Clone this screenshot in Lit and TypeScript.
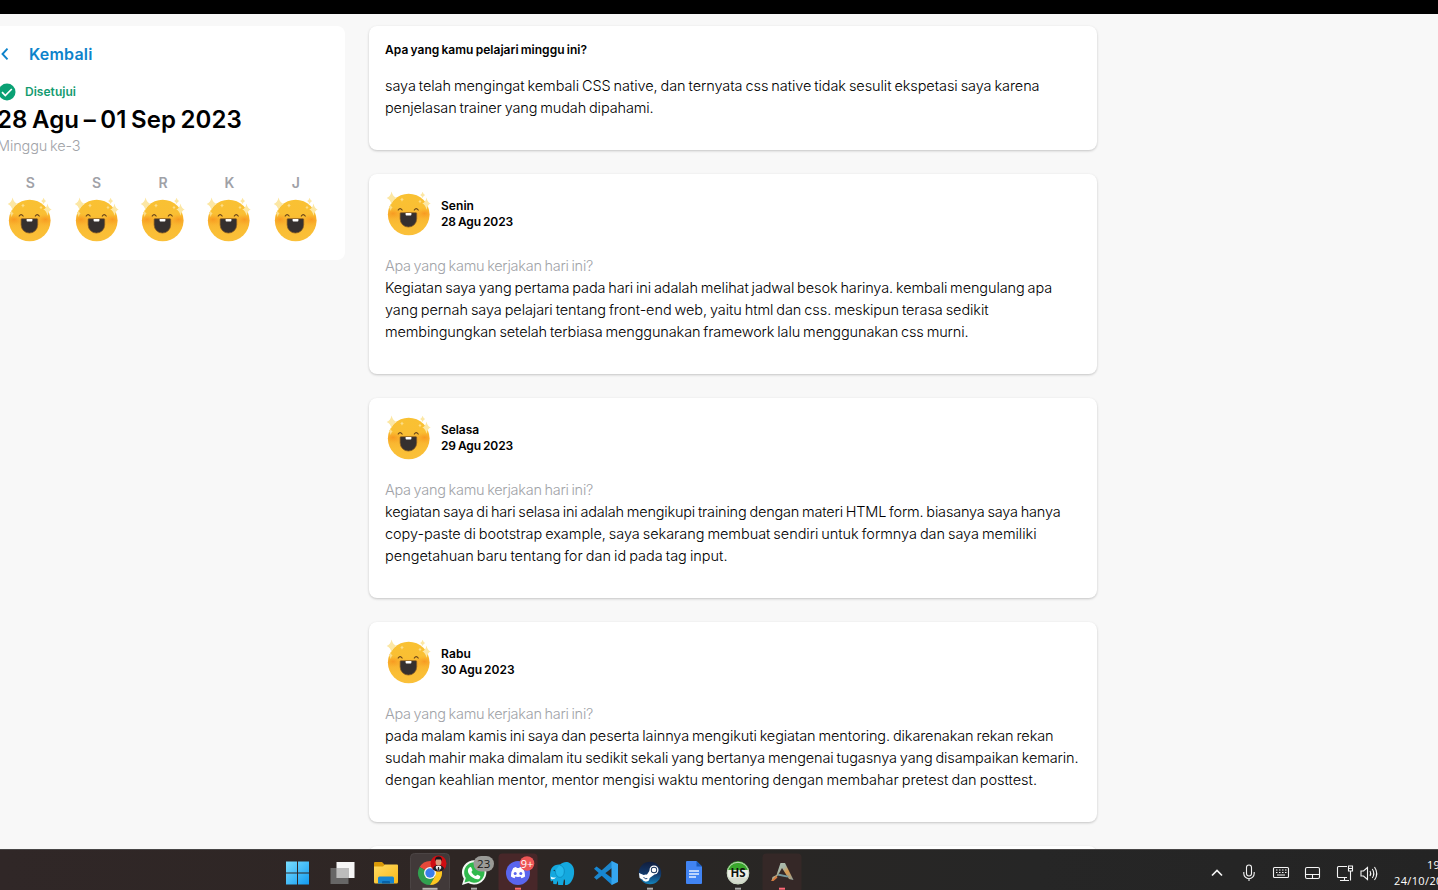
import { LitElement, html, css, svg } from "lit";
import { customElement, property } from "lit/decorators.js";
import { classMap } from "lit/directives/class-map.js";

/* One line of copy, tracked so that it fills a given measure. */
@customElement("fit-line")
class FitLine extends LitElement {
  @property({ type: Number }) width = 0;
  @property() text = "";
  static styles = css`
    :host { display: block; white-space: nowrap; }
    span { display: inline-block; white-space: pre; word-spacing: -0.07em; }
  `;
  firstUpdated() {
    this.fit();
    document.fonts.ready.then(() => this.fit());
  }
  fit() {
    const s = this.renderRoot.querySelector("span") as HTMLElement;
    s.style.letterSpacing = "0px";
    const natural = s.getBoundingClientRect().width;
    s.style.letterSpacing = (this.width - natural) / this.text.length + "px";
  }
  render() {
    return html`<span>${this.text}</span>`;
  }
}

@customElement("happy-face")
class HappyFace extends LitElement {
  static styles = css`
    :host { display: block; width: 48px; height: 48px; }
    svg { display: block; }
  `;
  render() {
    return html`<svg width="48" height="48" viewBox="0 0 48 48">
      <defs>
        <linearGradient id="skin" x1="0" y1="0" x2="0" y2="1">
          <stop offset="0" stop-color="#f9c133" /><stop offset=".38" stop-color="#fabf33" />
          <stop offset=".54" stop-color="#f9b32f" /><stop offset=".75" stop-color="#fabe35" /><stop offset="1" stop-color="#fac03a" />
        </linearGradient>
        <radialGradient id="cheek"><stop offset="0" stop-color="#f7941f" stop-opacity=".85" /><stop offset="1" stop-color="#f9a825" stop-opacity="0" /></radialGradient>
        <clipPath id="disc"><circle cx="23.7" cy="24.5" r="20.8" /></clipPath>
      </defs>
      <circle cx="23.7" cy="24.5" r="20.8" fill="url(#skin)" />
      <g clip-path="url(#disc)">
        <ellipse cx="8" cy="23.5" rx="10" ry="6" fill="url(#cheek)" />
        <ellipse cx="39.500" cy="23.5" rx="10" ry="6" fill="url(#cheek)" />
      </g>
      <path d="M13.200 20q1.900-2.700 3.900 0M29.300 20q1.900-2.700 3.900 0" fill="none" stroke="#6b4519" stroke-width="1.200" stroke-linecap="round" />
      <path d="M15.800 22.700h15.200q.7 0 .7.900v5.200a8.300 8.300 0 0 1-16.600 0v-5.200q0-.9.7-.9z" fill="#35302f" stroke="#8a5c22" stroke-width=".7" />
      <path d="M20.600 22.900h5.800v1.900q0 .8-.8.8h-4.200q-.8 0-.8-.8z" fill="#fff" />
      <g fill="#fce7a4">
        <path d="M6.600 1.500q1.200 5.200 5 6.500q-3.800 1.300-5 6.500q-1.200-5.200-4.900-6.500q3.700-1.300 4.900-6.500z" />
        <path d="M41.500 7.500q1 4.900 4.200 6.100q-3.200 1.200-4.200 6.100q-1-4.900-4.200-6.100q3.200-1.200 4.200-6.100z" />
        <path d="M37.600 1.700q.7 2.500 2.500 3.200q-1.800.8-2.500 3.200q-.7-2.400-2.500-3.200q1.800-.7 2.500-3.200z" />
        <path d="M17 7.500q.5 1.600 1.800 2.100q-1.300.5-1.800 2.100q-.5-1.600-1.800-2.100q1.300-.5 1.800-2.100zM5.700 14.500q.5 2.400 1.900 3q-1.400.6-1.900 3.500q-.5-2.900-1.900-3.500q1.400-.6 1.900-3zM35 9.500q.4 1.500 1.600 2q-1.200.5-1.600 2q-.4-1.500-1.600-2q1.200-.5 1.600-2z" opacity=".75" />
      </g>
    </svg>`;
  }
}

const days = [
  { name: "Senin", nw: 33, date: "28 Agu 2023", dw: 72, lines: [
    ["Kegiatan saya yang pertama pada hari ini adalah melihat jadwal besok harinya. kembali mengulang apa", 667],
    ["yang pernah saya pelajari tentang front-end web, yaitu html dan css. meskipun terasa sedikit", 603.5],
    ["membingungkan setelah terbiasa menggunakan framework lalu menggunakan css murni.", 583.5]] },
  { name: "Selasa", nw: 38, date: "29 Agu 2023", dw: 72, lines: [
    ["kegiatan saya di hari selasa ini adalah mengikupi training dengan materi HTML form. biasanya saya hanya", 675.5],
    ["copy-paste di bootstrap example, saya sekarang membuat sendiri untuk formnya dan saya memiliki", 651.5],
    ["pengetahuan baru tentang for dan id pada tag input.", 342.5]] },
  { name: "Rabu", nw: 30, date: "30 Agu 2023", dw: 73.5, lines: [
    ["pada malam kamis ini saya dan peserta lainnya mengikuti kegiatan mentoring. dikarenakan rekan rekan", 668.5],
    ["sudah mahir maka dimalam itu sedikit sekali yang bertanya mengenai tugasnya yang disampaikan kemarin.", 693.5],
    ["dengan keahlian mentor, mentor mengisi waktu mentoring dengan membahar pretest dan posttest.", 652]] },
];

/* Taskbar pictograms, each drawn on a 40 x 41 slot. */
const apps = [
  { id: "start", art: svg`<defs><linearGradient id="win" x1="0" y1="0" x2="1" y2="1"><stop offset="0" stop-color="#7adeff"/><stop offset="1" stop-color="#129bf0"/></linearGradient></defs><path d="M8.500 13h11v11h-11zM20.500 13h11v11h-11zM8.500 25h11v11h-11zM20.500 25h11v11h-11z" fill="url(#win)" transform="translate(-.5 -.5)"/>` },
  { id: "tasks", art: svg`<g transform="translate(-1.500 0)"><path d="M16 13h18v16H16z" fill="#f6f6f6"/><path d="M10 19h18v16H10z" fill="#707070" opacity=".88"/><path d="M16 19h12v10H16z" fill="#bcbcbc"/></g>` },
  { id: "files", art: svg`<defs><linearGradient id="fold" x1="0" y1="0" x2="1" y2="1"><stop offset="0" stop-color="#ffdc62"/><stop offset="1" stop-color="#f7b719"/></linearGradient></defs><path d="M8 14q0-1 1-1h7l3 3v7H8z" fill="#d99a08"/><path d="M8 17.500h9l2-2h12q1 0 1 1V33q0 1.500-1.500 1.500h-21Q8 34.500 8 33z" fill="url(#fold)"/><path d="M12 34.500V29q0-1.500 1.500-1.500h13q1.500 0 1.500 1.500v5.500z" fill="#1685d0"/><path d="M16 34.500V33q0-1 1-1h6q1 0 1 1v1.500z" fill="#0862a7"/>` },
  { id: "chrome", cls: "active", art: svg`<path d="M20 24L9.600 18A12 12 0 0 1 30.400 18H20z" fill="#e5483a"/><path d="M20 24L9.600 18A12 12 0 0 0 20 36l5.200-9z" fill="#31a04f"/><path d="M20 18h10.400A12 12 0 0 1 20 36l5.200-9z" fill="#fcc621"/><circle cx="20" cy="24" r="6" fill="#f5f5f5"/><circle cx="20" cy="24" r="4.700" fill="#3b7ded"/><circle cx="28.500" cy="14.500" r="8" fill="#d00d12"/><path d="M22.700 20q1.500-4 5.800-4t5.800 4q-2.200 2.500-5.800 2.500T22.700 20z" fill="#202026"/><path d="M26 17h5l.3 2-2.800 3.500-2.800-3.500z" fill="#eee"/><ellipse cx="28.500" cy="13" rx="2.900" ry="3.800" fill="#d69a7c"/><path d="M25.200 12.500q-.8-5 3.300-5t3.300 5l-.8-2h-5z" fill="#17151a"/><path d="M28 18h1l.5 3-1 1-1-1z" fill="#222"/><path d="M12.500 39.800h15" stroke="#b9b5b2" stroke-width="2"/>` },
  { id: "wa", art: svg`<path d="M8 36l1.800-6.200A12.200 12.200 0 1 1 14.200 34z" fill="#f4f8f4"/><path d="M10.500 33.500l1.300-4.400A10.200 10.200 0 1 1 15.200 32.300z" fill="#30b94c"/><path d="M15.500 18.500c.8-.8 1.500-.6 1.900.2l1 2.200c.2.700-.8 1.600-1 2 .9 2 2.500 3.300 4.400 4.200.6-.3 1.200-1.500 1.900-1.300l2.300 1.200c.6.400.3 1.700-.4 2.400-1.600 1.500-4.300 1.100-7.400-1.100-3.700-2.700-6-7-2.700-9.800z" fill="#fff"/><rect x="19.500" y="7" width="20.500" height="15.500" rx="7.700" fill="#9a9a96"/><text x="29.700" y="19" text-anchor="middle" font-size="11.500" fill="#171717">23</text><path d="M17 39.700h6" stroke="#aaa" stroke-width="2"/>` },
  { id: "discord", cls: "alert", art: svg`<circle cx="20" cy="24" r="12" fill="#5965ee"/><path d="M15.200 19q2-.9 3-1l.5.9h2.600l.5-.9q1.200.1 3 1 2.600 4 2.300 8.600-1.700 1.300-3.600 1.700l-.9-1.500 1-.5q-3.600 1.300-7.200 0l1 .5-.9 1.500q-1.900-.4-3.600-1.700-.3-4.600 2.300-8.600z" fill="#fff"/><circle cx="17.200" cy="24.400" r="1.500" fill="#5965ee"/><circle cx="22.800" cy="24.400" r="1.500" fill="#5965ee"/><circle cx="29" cy="14.500" r="7.300" fill="#ee5555"/><text x="29" y="18.500" text-anchor="middle" font-size="11" fill="#fff">9+</text><path d="M17 39.700h6" stroke="#ff6b6b" stroke-width="2"/>` },
  { id: "elephant", art: svg`<path d="M9 32.500C7.500 29.500 7.700 22 9.800 19c1.700-2.800 5.200-3.700 8.200-3.500 3-2.800 7.500-3.500 10-1.200 3.800 2.600 4.500 6.700 4 11-.4 3.600-2.200 7.400-4.600 9.500-1.400 1.200-3 1.400-4.400 1.200v-4.500l-1-1.500-1 6h-4.800l-.4-4.500-1.300 3.800-3.200-.3-.3-3.500z" fill="#14a8de"/><path d="M17.500 16c4 1 5.500 4.500 4.500 8.500-.7 3-3 4.500-5.500 3.500-2.300-1-3.200-3.500-3-6.500" fill="#23b9ec" stroke="#0b86ba" stroke-width=".8"/><path d="M8.700 27.500q2.300 1.800 5.300.5q-1.500 3-4.800 2z" fill="#e8f7fc"/><circle cx="12.300" cy="21.500" r=".8" fill="#16485a"/>` },
  { id: "vscode", art: svg`<path d="M26 12L8 28.300l2.600 2.400L28 17.500z" fill="#1c86cc"/><path d="M10.600 17.500L8 19.800 26 36l2.500-5z" fill="#1687d4"/><path d="M25.800 12l6.200 3v18l-6.200 3q-.3-.2-.3-1V13q0-.8.300-1z" fill="#35a6f0"/>` },
  { id: "steam", art: svg`<defs><linearGradient id="st" x1="0" y1="0" x2="0" y2="1"><stop offset="0" stop-color="#111d3c"/><stop offset=".55" stop-color="#123a6c"/><stop offset="1" stop-color="#1384bd"/></linearGradient></defs><circle cx="20" cy="24" r="11.200" fill="url(#st)"/><path d="M9 24l7 3 4-6 4.500 4.500-5.500 4-3 3L9.600 29z" fill="#fff"/><circle cx="16" cy="29" r="3.500" fill="#fff"/><circle cx="24" cy="21" r="4.500" fill="#fff"/><circle cx="24" cy="21" r="3.200" fill="#173259"/><circle cx="24" cy="21" r="2.300" fill="#fff"/><path d="M13.500 28q1.500 2.800 3.800 1.500" stroke="#173f70" stroke-width=".9" fill="none"/><path d="M17 39.700h6" stroke="#aaa" stroke-width="2"/>` },
  { id: "docs", art: svg`<path d="M12.500 12h10l5.500 5.500V34q0 1-1 1H13q-1 0-1-1V12.500z" fill="#4184f3"/><path d="M22.500 12v5.500H28z" fill="#185abc"/><path d="M15 22h10M15 25h10M15 28h7" stroke="#e7efff" stroke-width="1.500"/>` },
  { id: "hs", art: svg`<circle cx="20" cy="24" r="11.200" fill="#eef0e9"/><path d="M9.100 21a11.200 11.200 0 0 1 21.800 0z" fill="#39a82c"/><path d="M9.700 28.500a11.200 11.200 0 0 0 20.600 0z" fill="#d6dccf"/><circle cx="20" cy="24" r="10.700" fill="none" stroke="#c6d6be"/><text x="20" y="28.200" text-anchor="middle" font-size="11.500" font-weight="700" fill="#101410">HS</text><path d="M17 39.700h6" stroke="#aaa" stroke-width="2"/>` },
  { id: "ark", cls: "warm", art: svg`<defs><linearGradient id="ark" x1="0" y1="0" x2="1" y2="1"><stop offset="0" stop-color="#bac9bd"/><stop offset=".4" stop-color="#a5b5a5"/><stop offset=".6" stop-color="#d99a4e"/><stop offset="1" stop-color="#87a4aa"/></linearGradient></defs><path d="M18.500 14h4.500l8.500 17-4.500-1-7-11-4.500 8-6 5 1-4 4-2z" fill="url(#ark)"/><path d="M16 24.500l11 2.500-1.500 1.500-10-2z" fill="#76999e"/><path d="M9 32l5-5 1.500 1.500-4 3.500z" fill="#d77a3f"/><path d="M17 39.700h6" stroke="#ff6878" stroke-width="2"/>` },
];

const tray = [
  svg`<path d="M11 26.500l5-5 5 5" stroke-width="1.700"/>`,
  svg`<rect x="13.500" y="16" width="5" height="11" rx="2.500"/><path d="M10.800 23v1.500a5.200 5.200 0 0 0 10.400 0V23M16 29.700V32"/>`,
  svg`<rect x="8.500" y="18.500" width="15" height="10" rx="1"/><path d="M11 21h1.500m1.500 0h1.500m1.500 0h1.500m1.500 0h1.500M11 23.500h1.500m1.500 0h1.500m1.500 0h1.500m1.500 0h1.500M12 26h8"/>`,
  svg`<rect x="8.500" y="18.500" width="14" height="11" rx="1.500"/><path d="M8.500 25.500h14M15.500 25.500v4"/>`,
  svg`<path d="M18 17.500H9.500q-1 0-1 1v9q0 1 1 1H18M11 31.500h9M15.500 28.500v3M21.500 22v9.500M19.500 17h4v5h-4zM19.500 19.500h4"/>`,
  svg`<path d="M8 22h2.500l4-3.500v12L10.500 27H8zM17 22q1.500 2.500 0 5M19.300 20q3 4.500 0 9M21.500 18q4.500 6.500 0 13"/>`,
];

@customElement("app-root")
class AppRoot extends LitElement {
  static styles = css`
    :host { display: flex; flex-direction: column; width: 1438px; height: 890px; overflow: hidden; box-sizing: border-box; border-top: 14px solid #000; background: #f8f8f8; color: #000; font: 300 14.500px/22px Inter, "Open Sans", sans-serif; }
    .page { display: flex; align-items: flex-start; gap: 24px; height: 835px; padding-top: 12px; box-sizing: border-box; overflow: hidden; flex: none; }
    .week { width: 364px; height: 234px; margin-left: -19px; padding: 17px 16px 0; box-sizing: border-box; border-radius: 8px; background: #fff; flex: none; }
    .back { display: flex; align-items: center; height: 22px; color: #0d83cb; font-size: 16px; font-weight: 600; }
    .back svg { width: 32px; height: 22px; }
    .status { display: flex; align-items: center; gap: 9px; height: 18px; margin-top: 18px; color: #139b70; font-size: 12px; font-weight: 600; }
    .status svg { width: 19px; height: 18px; }
    .range { margin-top: 2px; font-size: 24px; font-weight: 600; line-height: 34px; height: 34px; }
    .number { color: #a1a3a8; height: 22px; margin-top: -2px; }
    .faces { display: grid; grid-template-columns: repeat(5, 1fr); margin-top: 15px; text-align: center; color: #9fa1a7; font-size: 14px; font-weight: 600; justify-items: center; }
    .faces happy-face { margin-top: 2px; }
    .feed { display: flex; flex-direction: column; gap: 24px; width: 728px; flex: none; }
    .card { box-sizing: border-box; height: 200px; padding: 16px; border-radius: 8px; background: #fff; box-shadow: 0 1px 3px rgba(0,0,0,.14), 0 1px 2px rgba(0,0,0,.08); flex: none; }
    .summary { height: 124px; }
    .title { font-size: 12px; font-weight: 600; line-height: 16px; margin-bottom: 17px; }
    .who { display: flex; align-items: center; gap: 8px; height: 48px; font-size: 12px; font-weight: 600; line-height: 16px; }
    .ask { color: #a1a3a8; margin-top: 17px; }
    .bar { display: flex; height: 41px; flex: none; box-sizing: border-box; border-top: 1px solid #494747; background: linear-gradient(90deg, #302727 0, #2e2624 32%, #292624 48%, #262626 72%, #242424 100%); font-family: "Open Sans", sans-serif; font-weight: 400; }
    .apps { display: flex; gap: 4.060px; padding-left: 277.500px; width: 920px; box-sizing: border-box; flex: none; }
    .app { width: 40px; height: 41px; margin-top: -1px; flex: none; }
    .app svg, .sys svg { display: block; }
    .slot { fill: transparent; }
    .active .slot { fill: #413939; stroke: #4b4444; }
    .alert .slot { fill: #482729; }
    .warm .slot { fill: #352827; }
    .sys { display: flex; margin-left: 281px; flex: none; }
    .sys svg { width: 32px; height: 41px; margin-top: -1px; fill: none; stroke: #f4f4f4; stroke-width: 1.100; flex: none; }
    .sys svg:last-child { margin-left: -8px; }
    .clock { flex: none; margin: 7px 0 0 9px; width: 63px; font-size: 11px; line-height: 16px; color: #fff; }
    .time { padding-left: 33px; }
  `;
  render() {
    return html`
      <main class="page">
        <section class="week">
          <div class="back">
            <svg viewBox="0 0 32 22"><path d="M10.500 5.700L5.500 11l5 5.300" fill="none" stroke="#0d83cb" stroke-width="1.900" /></svg>
            <fit-line .text=${"Kembali"} .width=${63.5}></fit-line>
          </div>
          <div class="status">
            <svg viewBox="0 0 19 18"><circle cx="10" cy="9" r="8.500" fill="#0aa174" /><path d="M5 9.200l3.300 3.300 6.500-6.500" fill="none" stroke="#fff" stroke-width="1.700" /></svg>
            <fit-line .text=${"Disetujui"} .width=${51}></fit-line>
          </div>
          <fit-line class="range" .text=${"28 Agu – 01 Sep 2023"} .width=${245}></fit-line>
          <fit-line class="number" .text=${"Minggu ke-3"} .width=${83.5}></fit-line>
          <div class="faces">${["S", "S", "R", "K", "J"].map((d) => html`<div>${d}<happy-face></happy-face></div>`)}</div>
        </section>
        <section class="feed">
          <article class="card summary">
            <fit-line class="title" .text=${"Apa yang kamu pelajari minggu ini?"} .width=${202}></fit-line>
            <fit-line .text=${"saya telah mengingat kembali CSS native, dan ternyata css native tidak sesulit ekspetasi saya karena"} .width=${654.5}></fit-line>
            <fit-line .text=${"penjelasan trainer yang mudah dipahami."} .width=${268.5}></fit-line>
          </article>
          ${days.map((d) => html`<article class="card">
            <div class="who"><happy-face></happy-face>
              <div><fit-line .text=${d.name} .width=${d.nw}></fit-line><fit-line .text=${d.date} .width=${d.dw}></fit-line></div>
            </div>
            <fit-line class="ask" .text=${"Apa yang kamu kerjakan hari ini?"} .width=${208}></fit-line>
            ${d.lines.map(([t, w]) => html`<fit-line .text=${t} .width=${w}></fit-line>`)}
          </article>`)}
          <article class="card"></article>
        </section>
      </main>
      <footer class="bar">
        <div class="apps">${apps.map((a) => html`<div class=${classMap({ app: true, [a.cls ?? "plain"]: true })}>
          <svg width="40" height="41" viewBox="0 0 40 41"><rect class="slot" x=".5" y="4.500" width="39" height="39" rx="4" />${a.art}</svg></div>`)}</div>
        <div class="sys">${tray.map((t) => html`<svg viewBox="0 0 32 41">${t}</svg>`)}</div>
        <div class="clock"><fit-line class="time" .text=${"19.35"} .width=${29}></fit-line><fit-line .text=${"24/10/2023"} .width=${62}></fit-line></div>
      </footer>
    `;
  }
}
